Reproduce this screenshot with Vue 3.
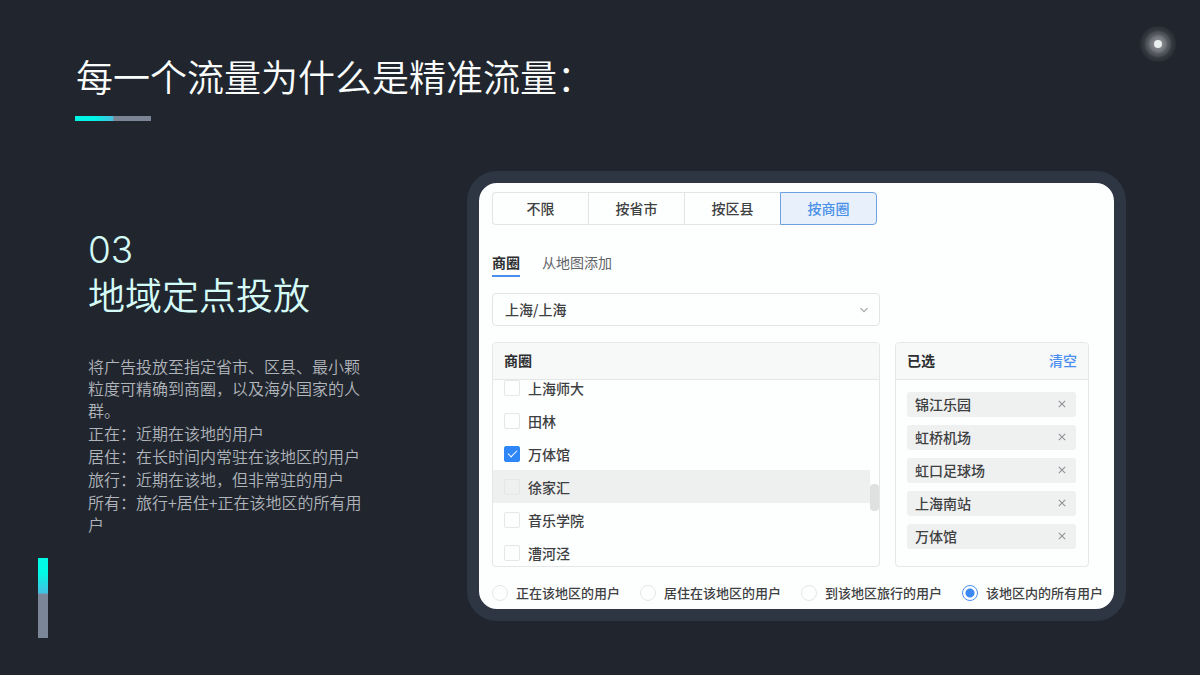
<script setup>
import { ref } from 'vue'

const scopes = ['不限', '按省市', '按区县', '按商圈']
const scope = ref('按商圈')
const tabs = ['商圈', '从地图添加']
const tab = ref('商圈')
const city = ref('上海/上海')

const areas = ref([
  { name: '上海师大', checked: false },
  { name: '田林', checked: false },
  { name: '万体馆', checked: true },
  { name: '徐家汇', checked: false, hover: true },
  { name: '音乐学院', checked: false },
  { name: '漕河泾', checked: false }
])
const selected = ref(['锦江乐园', '虹桥机场', '虹口足球场', '上海南站', '万体馆'])

const audiences = ['正在该地区的用户', '居住在该地区的用户', '到该地区旅行的用户', '该地区内的所有用户']
const audience = ref('该地区内的所有用户')

const notes = [
  '将广告投放至指定省市、区县、最小颗粒度可精确到商圈，以及海外国家的人群。',
  '正在：近期在该地的用户',
  '居住：在长时间内常驻在该地区的用户',
  '旅行：近期在该地，但非常驻的用户',
  '所有：旅行+居住+正在该地区的所有用户'
]

function remove(name) {
  selected.value = selected.value.filter((n) => n !== name)
}
</script>

<template>
  <div class="slide" lang="zh-CN">
    <header class="head">
      <h1>每一个流量为什么是精准流量：</h1>
      <div class="rule"></div>
    </header>
    <svg class="glow" viewBox="0 0 40 40" aria-hidden="true">
      <defs>
        <radialGradient id="halo">
          <stop offset="0" stop-color="#fff" stop-opacity=".5" />
          <stop offset=".5" stop-color="#fff" stop-opacity=".22" />
          <stop offset=".75" stop-color="#fff" stop-opacity=".1" />
          <stop offset="1" stop-color="#fff" stop-opacity=".03" />
        </radialGradient>
      </defs>
      <circle cx="20" cy="20" r="18" fill="url(#halo)" />
      <circle cx="20" cy="20" r="13" fill="#fff" fill-opacity=".06" />
      <circle cx="20" cy="20" r="9" fill="#fff" fill-opacity=".08" />
      <circle cx="20" cy="20" r="4" fill="#e9efee" />
    </svg>
    <div class="side-bar"></div>

    <main class="content">
      <section class="intro">
        <h2><span class="num">03</span>地域定点投放</h2>
        <div class="notes">
          <p v-for="n in notes" :key="n">{{ n }}</p>
        </div>
      </section>

      <section class="panel">
        <div class="form">
          <div class="segments">
            <button v-for="s in scopes" :key="s" type="button" :class="{ on: s === scope }" @click="scope = s">{{ s }}</button>
          </div>
          <nav class="tabs">
            <button v-for="t in tabs" :key="t" type="button" :class="{ on: t === tab }" @click="tab = t">{{ t }}</button>
          </nav>
          <div class="boxes">
            <div class="select">
              <select v-model="city" aria-label="城市">
                <option>上海/上海</option>
              </select>
              <svg viewBox="0 0 10 10" aria-hidden="true"><path d="M1.5 3.2 5 6.7 8.5 3.2" fill="none" stroke="#a3a7ab" stroke-width="1.2" /></svg>
            </div>
            <div class="box source">
              <div class="box-head"><strong>商圈</strong></div>
              <div class="list">
                <ul>
                  <li v-for="a in areas" :key="a.name" :class="{ hover: a.hover }">
                    <label><input v-model="a.checked" type="checkbox" />{{ a.name }}</label>
                  </li>
                </ul>
                <span class="thumb"></span>
              </div>
            </div>
            <div class="box target">
              <div class="box-head">
                <strong>已选</strong>
                <button type="button" class="clear" @click="selected = []">清空</button>
              </div>
              <ul class="tags">
                <li v-for="n in selected" :key="n">
                  {{ n }}
                  <button type="button" :aria-label="'移除' + n" @click="remove(n)">
                    <svg viewBox="0 0 10 10" aria-hidden="true"><path d="M1.8 1.8 8.2 8.2M8.2 1.8 1.8 8.2" stroke="#8f9396" stroke-width="1.1" /></svg>
                  </button>
                </li>
              </ul>
            </div>
          </div>
        </div>
        <div class="radios">
          <label v-for="a in audiences" :key="a"><input v-model="audience" type="radio" name="audience" :value="a" />{{ a }}</label>
        </div>
      </section>
    </main>
  </div>
</template>

<style>
body {
  margin: 0;
  background: #21262e;
}
</style>

<style scoped>
.slide {
  position: relative;
  box-sizing: border-box;
  min-height: 100vh;
  padding: 48px 74px 54px 75px;
  background: #21262e;
  font-family: "Noto Sans CJK SC", "Noto Sans", sans-serif;
}
h1, h2, p, ul { margin: 0; padding: 0; }
ul { list-style: none; }
button {
  margin: 0;
  padding: 0;
  border: 0;
  background: none;
  color: inherit;
  font: inherit;
  cursor: pointer;
}
h1 {
  padding-left: 1px;
  color: #fbfdfd;
  font-size: 37px;
  font-weight: 350;
  line-height: 56px;
}
.rule {
  width: 76px;
  height: 5px;
  margin-top: 12px;
  background: linear-gradient(90deg, #00f5e4 0 26%, #48bfe0 50%, #7b8595 51%);
}
.glow {
  position: absolute;
  top: 24px;
  right: 22px;
  width: 40px;
  height: 40px;
}
.side-bar {
  position: absolute;
  left: 38px;
  bottom: 37px;
  width: 10px;
  height: 80px;
  background: linear-gradient(180deg, #00fae6 0 18%, #44bfe2 44%, #7b8798 45%);
}
.content {
  display: grid;
  grid-template-columns: 379fr 659fr;
  align-items: start;
  margin-top: 50px;
  padding-left: 13px;
}
.intro { padding-top: 57px; }
h2 {
  color: #d4fbf7;
  font-size: 37px;
  font-weight: 350;
  line-height: 44px;
}
.num {
  display: block;
  font-family: Inter, "Noto Sans", sans-serif;
  font-weight: 300;
}
.notes {
  display: flex;
  flex-direction: column;
  gap: 1px;
  width: 280px;
  margin-top: 39px;
  color: #b0b4bb;
  font-size: 16px;
  font-weight: 350;
  line-height: 22px;
}
.panel {
  padding: 9px 0 6px 13px;
  border: 12px solid #2e3644;
  border-radius: 30px;
  background: #fdfefe;
  color: #3e4042;
  font-size: 14px;
  font-weight: 500;
  line-height: 20px;
  white-space: nowrap;
}
.form { padding-right: 25px; }
.segments {
  display: flex;
  width: 385px;
}
.segments button {
  box-sizing: border-box;
  flex: 1;
  height: 33px;
  padding-bottom: 2px;
  border: 1px solid #e2e4e5;
  border-right-width: 0;
}
.segments button:first-child { border-radius: 4px 0 0 4px; }
.segments button:last-child { border-right-width: 1px; border-radius: 0 4px 4px 0; }
.segments .on {
  border-color: #6ea3e0;
  background: #e8f0fc;
  color: #4a90e6;
}
.tabs {
  display: flex;
  gap: 22px;
  margin-top: 27px;
}
.tabs button {
  padding-bottom: 3px;
  border-bottom: 2px solid transparent;
  color: #626568;
  font-weight: 400;
}
.tabs .on {
  border-color: #4a8ff0;
  color: #2c2e30;
  font-weight: 700;
}
.boxes {
  display: grid;
  grid-template-columns: 2fr 1fr;
  gap: 16px 15px;
  margin-top: 16px;
}
.select { position: relative; }
.source { grid-column: 1; }
select {
  box-sizing: border-box;
  display: block;
  width: 100%;
  height: 33px;
  padding: 0 12px 2px;
  border: 1px solid #e2e4e5;
  border-radius: 4px;
  background: transparent;
  color: inherit;
  font: inherit;
  appearance: none;
}
.select svg {
  position: absolute;
  top: 12px;
  right: 11px;
  width: 10px;
  height: 10px;
  pointer-events: none;
}
.box {
  border: 1px solid #e4e6e7;
  border-radius: 4px;
  overflow: hidden;
}
.box-head {
  display: flex;
  justify-content: space-between;
  padding: 7px 11px 9px;
  border-bottom: 1px solid #e4e6e7;
  background: #f7f8f8;
  color: #2c2e30;
}
.clear { color: #4a8ff0; }
.list {
  position: relative;
  height: 186px;
  padding-right: 9px;
  overflow: hidden;
  line-height: 14px;
}
.list ul { margin-top: -9px; }
.list li { padding: 0 11px; }
.list .hover { background: #eeefef; }
.list label {
  display: flex;
  align-items: center;
  gap: 8px;
  height: 33px;
}
.thumb {
  position: absolute;
  top: 104px;
  right: 0;
  width: 9px;
  height: 27px;
  border-radius: 4px;
  background: #dfe0e0;
}
input {
  box-sizing: border-box;
  flex: none;
  width: 16px;
  height: 16px;
  margin: 0;
  border: 1px solid #e4e6e7;
  appearance: none;
}
input[type="checkbox"] {
  display: grid;
  place-items: center;
  border-radius: 2px;
}
input[type="checkbox"]:checked {
  border-color: #2f86f6;
  background: #2f86f6;
}
input[type="checkbox"]:checked::before {
  content: "";
  width: 8px;
  height: 4px;
  margin-bottom: 3px;
  border-bottom: 1px solid #fff;
  border-left: 1px solid #fff;
  transform: rotate(-45deg);
}
input[type="radio"] { border-radius: 50%; }
input[type="radio"]:checked {
  border-color: #4a8ff0;
  background: radial-gradient(circle, #3c88f2 0 4px, transparent 5px);
}
.tags {
  display: flex;
  flex-direction: column;
  gap: 8px;
  padding: 12px 12px 17px 11px;
}
.tags li {
  display: flex;
  align-items: center;
  justify-content: space-between;
  box-sizing: border-box;
  height: 25px;
  padding: 0 9px 2px 8px;
  border-radius: 3px;
  background: #eff0f0;
}
.tags button {
  display: grid;
  place-items: center;
  width: 10px;
  height: 10px;
}
.tags svg { width: 10px; height: 10px; }
.radios {
  display: flex;
  gap: 20px;
  margin-top: 16px;
  font-size: 13px;
}
.radios label {
  display: flex;
  align-items: center;
  gap: 8px;
}
</style>
